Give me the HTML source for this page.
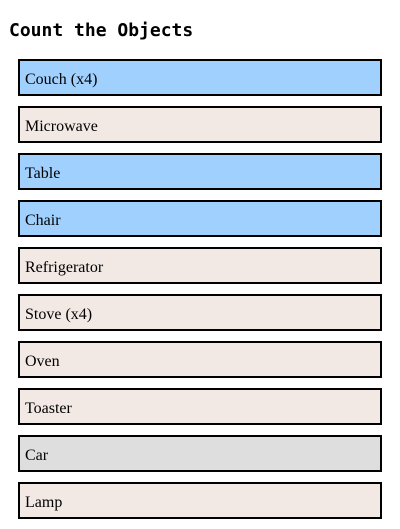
<!DOCTYPE html>
<html><head><style>
body{margin:0;background:#fff;width:400px;height:529px;overflow:hidden}
h1{font-family:"DejaVu Sans Mono",monospace;font-weight:bold;font-size:18px;margin:0;position:absolute;left:9px;top:20px;line-height:22px}
.b{position:absolute;left:18px;height:33px;border:2px solid #000;font-family:"Liberation Serif",serif;font-size:16px;line-height:37px;padding-left:5px;width:355px}
.bl{background:#a0d0fe}.p{background:#f2e8e4}.g{background:#dedede}
</style></head><body>
<h1>Count the Objects</h1>
<div class="b bl" style="top:59px">Couch (x4)</div>
<div class="b p" style="top:106px">Microwave</div>
<div class="b bl" style="top:153px">Table</div>
<div class="b bl" style="top:200px">Chair</div>
<div class="b p" style="top:247px">Refrigerator</div>
<div class="b p" style="top:294px">Stove (x4)</div>
<div class="b p" style="top:341px">Oven</div>
<div class="b p" style="top:388px">Toaster</div>
<div class="b g" style="top:435px">Car</div>
<div class="b p" style="top:482px">Lamp</div>
</body></html>
